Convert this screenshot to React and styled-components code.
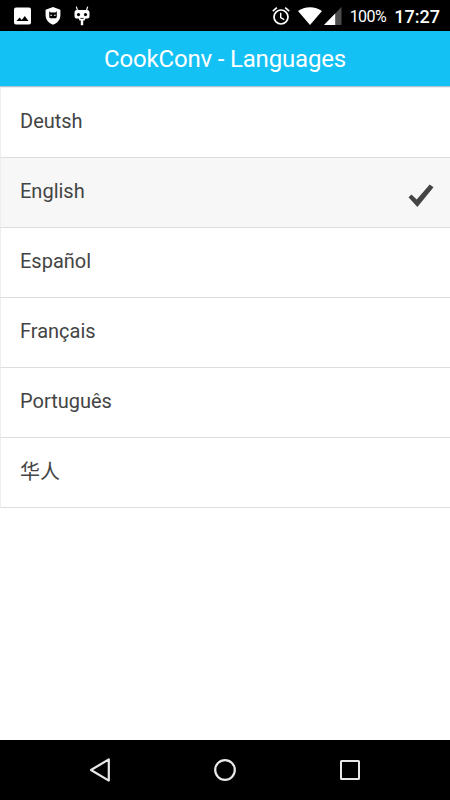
import React from "react";
import styled, { createGlobalStyle } from "styled-components";

const languages = [
  { label: "Deutsh" },
  { label: "English", selected: true },
  { label: "Español" },
  { label: "Français" },
  { label: "Português" },
  { label: "华人", cjk: true },
];

const PictureIcon = () => (
  <Icon width="18" height="18" viewBox="0 0 18 18">
    <path
      fill="#fff"
      fillRule="evenodd"
      d="M2 0.5h13a2 2 0 0 1 2 2v13a2 2 0 0 1-2 2H2a2 2 0 0 1-2-2v-13a2 2 0 0 1 2-2zM2.500 14h12l-3.700-5-3 3.900-2.200-2.500z"
    />
  </Icon>
);
const ShieldIcon = () => (
  <Icon width="16" height="18" viewBox="0 0 16 18">
    <path
      fill="#fff"
      d="M8 0l7.400 2.800v5.400c0 4.300-3 8-7.400 9.500C3.600 16.200.6 12.500.6 8.200V2.800z"
    />
    <path
      fill="#000"
      d="M4.200 4.200l1.500 1.400h4.600l1.500-1.400v5.300c0 1.200-.6 1.800-1.700 1.800H5.900c-1.100 0-1.700-.6-1.700-1.800z"
    />
    <path stroke="#fff" strokeWidth="1.100" d="M5.300 8.300h1.800M8.900 8.300h1.800" />
  </Icon>
);
const RobotIcon = () => (
  <Icon width="16" height="20" viewBox="0 0 16 20">
    <path stroke="#fff" strokeWidth="1.200" d="M2.300.6l1.300 4M13.700.6l-1.300 4" />
    <path
      fill="#fff"
      d="M3 4h10c1.600 0 2.500.9 2.500 2.400v3.500c0 1.700-1 2.700-2.700 2.700h-1.300l-1 1.800H9.200v4.800H6.800v-4.800H5.500l-1-1.800H3.200C1.500 12.600.5 11.600.5 9.900V6.400C.5 4.900 1.400 4 3 4z"
    />
    <circle cx="4.500" cy="8.600" r="1.600" fill="#000" />
    <circle cx="11.500" cy="8.600" r="1.600" fill="#000" />
    <path stroke="#000" strokeWidth=".8" d="M6.300 12.400h3.400" />
  </Icon>
);
const AlarmIcon = () => (
  <Icon width="18" height="20" viewBox="0 0 18 20" fill="none" stroke="#fff">
    <circle cx="9" cy="11" r="7" strokeWidth="1.700" />
    <path strokeWidth="1.600" d="M.8 5.200l4-3.500M17.200 5.200l-4-3.500" />
    <path strokeWidth="1.400" d="M8.700 6.800v4.700l3.500 2.100" />
  </Icon>
);
const WifiIcon = () => (
  <Icon width="24" height="18" viewBox="1 0 24 18">
    <path fill="#fff" d="M1 4C4.400 1.500 8.500.2 13 .2S21.600 1.500 25 4L13 18z" />
  </Icon>
);
const SignalIcon = () => (
  <Icon width="18" height="18" viewBox="0 0 18 18">
    <path fill="#4d4d4d" d="M17.500 0v18H0z" />
    <path fill="#fff" d="M11.200 6.500V18H0z" />
  </Icon>
);
const CheckIcon = () => (
  <Icon width="26" height="24" viewBox="0 0 26 24">
    <path fill="#444" d="M.5 13.300L3.500 10.500l5.200 5.100L21.700.4l3.800 2.900L9.400 23z" />
  </Icon>
);

export default function App() {
  return (
    <Screen>
      <GlobalStyle />
      <StatusBar>
        <Notifications>
          <PictureIcon />
          <ShieldIcon />
          <RobotIcon />
        </Notifications>
        <SystemInfo>
          <AlarmIcon />
          <Network>
            <WifiIcon />
            <SignalIcon />
          </Network>
          <Battery>100%</Battery>
          <Clock>17:27</Clock>
        </SystemInfo>
      </StatusBar>
      <Header>
        <Title>CookConv - Languages</Title>
      </Header>
      <List>
        {languages.map((language) => (
          <Row key={language.label} $selected={language.selected}>
            <Label $cjk={language.cjk}>{language.label}</Label>
            {language.selected && (
              <Selected>
                <CheckIcon />
              </Selected>
            )}
          </Row>
        ))}
      </List>
      <NavBar>
        <NavButton aria-label="Back">
          <Icon width="24" height="26" viewBox="0 0 24 26" fill="none">
            <path
              stroke="#e8e8e8"
              strokeWidth="2.200"
              strokeLinejoin="round"
              d="M20.800 2.400v21.200L3 13z"
            />
          </Icon>
        </NavButton>
        <NavButton aria-label="Home">
          <Icon width="24" height="24" viewBox="0 0 24 24" fill="none">
            <circle cx="12" cy="12" r="9.800" stroke="#e8e8e8" strokeWidth="2.200" />
          </Icon>
        </NavButton>
        <NavButton aria-label="Recent apps">
          <Icon width="24" height="24" viewBox="0 0 24 24" fill="none">
            <rect
              x="3"
              y="3"
              width="18"
              height="18"
              rx=".5"
              stroke="#e8e8e8"
              strokeWidth="2"
            />
          </Icon>
        </NavButton>
      </NavBar>
    </Screen>
  );
}

const GlobalStyle = createGlobalStyle`
  body {
    margin: 0;
    background-color: #ffffff;
  }
`;
const Icon = styled.svg`
  display: block;
  flex-shrink: 0;
`;
const Screen = styled.div`
  width: 450px;
  height: 800px;
  display: flex;
  flex-direction: column;
  background-color: #ffffff;
  font-family: Roboto, "Noto Sans CJK SC", sans-serif;
  overflow: hidden;
`;
const StatusBar = styled.div`
  box-sizing: border-box;
  height: 31px;
  display: flex;
  justify-content: space-between;
  align-items: center;
  background-color: #000000;
  padding: 0px 10px 0px 14px;
  color: #ffffff;
`;
const Notifications = styled.div`
  display: flex;
  align-items: center;
  gap: 13px;
`;
const SystemInfo = styled.div`
  display: flex;
  align-items: center;
  gap: 8px;
`;
const Network = styled.div`
  display: flex;
  align-items: center;
  gap: 2px;
`;
const Battery = styled.div`
  font-size: 16px;
  letter-spacing: -0.5px;
  line-height: 20px;
  padding: 2px 0px 0px 0px;
`;
const Clock = styled.div`
  font-size: 18px;
  font-weight: 500;
  line-height: 20px;
  padding: 2px 0px 0px 0px;
`;
const Header = styled.div`
  box-sizing: border-box;
  height: 56px;
  display: flex;
  justify-content: center;
  align-items: center;
  background-color: #14c1f5;
  border-bottom: 1px solid #a9c6d1;
`;
const Title = styled.div`
  font-size: 24px;
  letter-spacing: -0.18px;
  line-height: 28px;
  color: #ffffff;
`;
const List = styled.div`
  flex: 1;
  border-top: 1px solid #eeeeee;
`;
const Row = styled.div`
  box-sizing: border-box;
  height: 70px;
  display: flex;
  justify-content: space-between;
  align-items: center;
  background-color: ${(props) => (props.$selected ? "#f7f7f7" : "#ffffff")};
  border-left: 1px solid #eeeeee;
  border-bottom: 1px solid #dddddd;
  padding: 0px 16px 3px 19px;
`;
const Label = styled.div`
  font-size: 20px;
  line-height: 24px;
  color: #444444;
  padding: ${(props) => (props.$cjk ? "2px" : "0px")} 0px 0px 0px;
`;
const Selected = styled.div`
  padding: 9px 0px 0px 0px;
`;
const NavBar = styled.div`
  height: 60px;
  display: flex;
  justify-content: center;
  align-items: center;
  gap: 101px;
  background-color: #000000;
`;
const NavButton = styled.button`
  width: 24px;
  height: 26px;
  display: flex;
  justify-content: center;
  align-items: center;
  background: none;
  border: none;
  padding: 0px;
`;
